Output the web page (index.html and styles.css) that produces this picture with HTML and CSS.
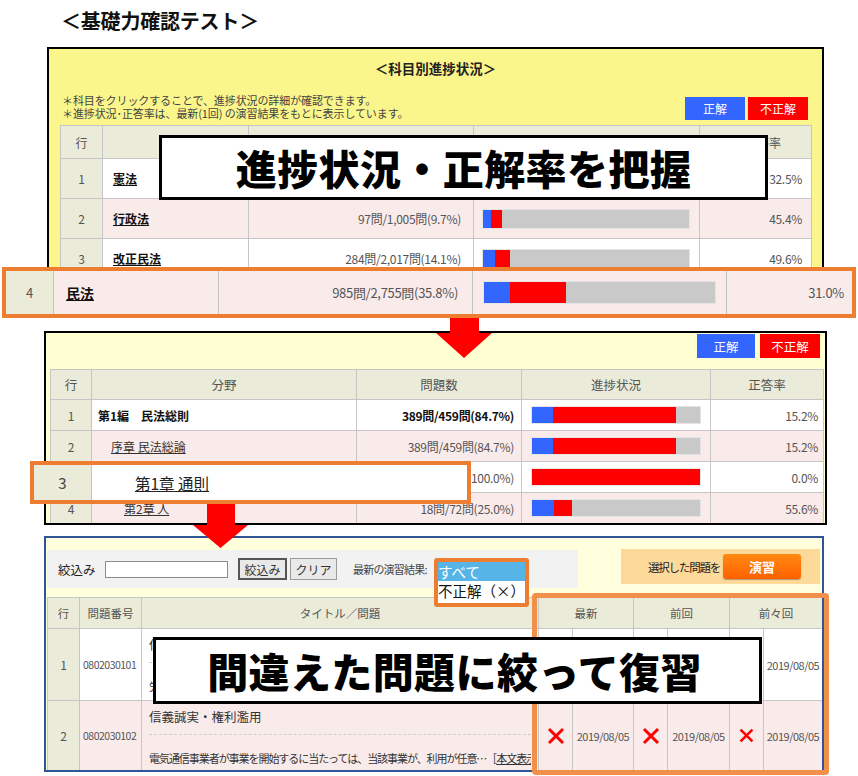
FILE: index.html
```html
<!DOCTYPE html>
<html lang="ja">
<head>
<meta charset="utf-8">
<title>基礎力確認テスト</title>
<link rel="stylesheet" href="styles.css">
</head>
<body>
<div class="canvas">
  <h1 class="page-title">＜基礎力確認テスト＞</h1>

  <!-- window 1 -->
  <section class="win win1">
    <h2 class="win1-title">＜科目別進捗状況＞</h2>
    <div class="win1-bar">
      <p class="notes">＊科目をクリックすることで、進捗状況の詳細が確認できます。<br>＊進捗状況･正答率は、最新(1回) の演習結果をもとに表示しています。</p>
      <div class="legend"><span class="lg lg-ok">正解</span><span class="lg lg-ng">不正解</span></div>
    </div>
    <table class="grid grid1">
      <colgroup><col class="g1c1"><col class="g1c2"><col class="g1c3"><col class="g1c4"><col class="g1c5"></colgroup>
      <thead><tr><th>行</th><th></th><th></th><th></th><th class="rate-h">正答率</th></tr></thead>
      <tbody>
        <tr><td class="no">1</td><td class="subj"><span class="link">憲法</span></td><td class="num"></td><td class="barcell"></td><td class="rate">32.5%</td></tr>
        <tr class="pink"><td class="no">2</td><td class="subj"><span class="link">行政法</span></td><td class="num">97問/1,005問(9.7%)</td><td class="barcell"><div class="bar"><span class="ok" style="width:8px"></span><span class="ng" style="width:11px"></span></div></td><td class="rate">45.4%</td></tr>
        <tr><td class="no">3</td><td class="subj"><span class="link">改正民法</span></td><td class="num">284問/2,017問(14.1%)</td><td class="barcell"><div class="bar"><span class="ok" style="width:12px"></span><span class="ng" style="width:15px"></span></div></td><td class="rate">49.6%</td></tr>
      </tbody>
    </table>
  </section>

  <!-- window 2 -->
  <section class="win win2">
    <div class="win2-head"><span class="lg lg-ok lg2a">正解</span><span class="lg lg-ng lg2b">不正解</span></div>
    <table class="grid grid2">
      <colgroup><col class="g2c1"><col class="g2c2"><col class="g2c3"><col class="g2c4"><col class="g2c5"></colgroup>
      <thead><tr><th>行</th><th>分野</th><th>問題数</th><th>進捗状況</th><th>正答率</th></tr></thead>
      <tbody>
        <tr><td class="no">1</td><td class="field strong">第1編　民法総則</td><td class="num strong">389問/459問(84.7%)</td><td class="barcell"><div class="bar bar2"><span class="ok" style="width:21px"></span><span class="ng" style="width:123px"></span></div></td><td class="rate">15.2%</td></tr>
        <tr class="pink"><td class="no">2</td><td class="field lv1"><span class="link2">序章 民法総論</span></td><td class="num">389問/459問(84.7%)</td><td class="barcell"><div class="bar bar2"><span class="ok" style="width:21px"></span><span class="ng" style="width:123px"></span></div></td><td class="rate">15.2%</td></tr>
        <tr><td class="no"></td><td class="field lv2"></td><td class="num">(100.0%)</td><td class="barcell"><div class="bar bar2"><span class="ng" style="width:169px"></span></div></td><td class="rate">0.0%</td></tr>
        <tr class="pink"><td class="no">4</td><td class="field lv2"><span class="link2">第2章 人</span></td><td class="num">18問/72問(25.0%)</td><td class="barcell"><div class="bar bar2"><span class="ok" style="width:22px"></span><span class="ng" style="width:18px"></span></div></td><td class="rate">55.6%</td></tr>
      </tbody>
    </table>
  </section>

  <!-- window 3 -->
  <section class="win win3">
    <div class="toolbar">
      <div class="filter">
        <span class="f-label">絞込み</span>
        <span class="f-input"></span>
        <span class="f-btn f-btn-on">絞込み</span>
        <span class="f-btn f-btn-clear">クリア</span>
        <span class="f-latest">最新の演習結果:</span>
      </div>
      <div class="exec"><span class="exec-text">選択した問題を</span><span class="exec-btn">演習</span></div>
    </div>
    <table class="grid grid3">
      <colgroup><col class="g3c1"><col class="g3c2"><col class="g3c3"><col class="g3m"><col class="g3d"><col class="g3m"><col class="g3d2"><col class="g3m"><col class="g3d3"></colgroup>
      <thead><tr><th>行</th><th>問題番号</th><th>タイトル／問題</th><th colspan="2">最新</th><th colspan="2">前回</th><th colspan="2">前々回</th></tr></thead>
      <tbody>
        <tr class="r1"><td class="no">1</td><td class="qno">0802030101</td><td class="ttl"><div class="t-head">信</div><div class="t-body">労</div></td><td class="mark"></td><td class="date"></td><td class="mark"></td><td class="date"></td><td class="mark"></td><td class="date">2019/08/05</td></tr>
        <tr class="pink r2"><td class="no">2</td><td class="qno">0802030102</td><td class="ttl"><div class="t-head">信義誠実・権利濫用</div><div class="t-body">電気通信事業者が事業を開始するに当たっては、当該事業が、利用が任意…［<span class="u">本文表示</span></div></td><td class="mark"><svg class="x" viewBox="0 0 20 20"><path d="M3 3L17 17M17 3L3 17"/></svg></td><td class="date">2019/08/05</td><td class="mark"><svg class="x" viewBox="0 0 20 20"><path d="M3 3L17 17M17 3L3 17"/></svg></td><td class="date">2019/08/05</td><td class="mark"><svg class="x xs" viewBox="0 0 20 20"><path d="M3 3L17 17M17 3L3 17"/></svg></td><td class="date">2019/08/05</td></tr>
      </tbody>
    </table>
  </section>

  <!-- arrows -->
  <svg class="arrow arrow1" viewBox="0 0 56 41"><polygon points="14,0 43,0 43,16 56,16 28,41 0,16 14,16"/></svg>
  <svg class="arrow arrow2" viewBox="0 0 55 45"><polygon points="14,0 42,0 42,22 55,22 27.5,45 0,22 14,22"/></svg>

  <!-- highlighted row 1 -->
  <div class="focus focus1">
    <span class="fc fc-no">4</span>
    <span class="fc fc-name"><span class="link">民法</span></span>
    <span class="fc fc-num">985問/2,755問(35.8%)</span>
    <span class="fc fc-bar"><span class="bar bar3"><span class="ok" style="width:26px"></span><span class="ng" style="width:56px"></span></span></span>
    <span class="fc fc-rate">31.0%</span>
  </div>

  <!-- highlighted row 2 -->
  <div class="focus focus2">
    <span class="f2-no">3</span>
    <span class="f2-name"><span class="link3">第1章 通則</span></span>
  </div>

  <!-- dropdown -->
  <div class="dropdown">
    <div class="dd-opt dd-sel">すべて</div>
    <div class="dd-opt">不正解（×）</div>
  </div>

  <!-- highlighted columns -->
  <div class="focus3"></div>

  <!-- callouts -->
  <div class="callout callout1">進捗状況・正解率を把握</div>
  <div class="callout callout3">間違えた問題に絞って復習</div>
</div>
</body>
</html>
```
FILE: styles.css
```css
* { box-sizing: border-box; margin: 0; padding: 0; }
html, body { margin: 0; background: #fff; }
body { font-family: "Noto Sans CJK JP", "Noto Sans", sans-serif; color: #333; }

.canvas { position: relative; width: 858px; height: 776px; overflow: hidden; background: #fff; }

.page-title { padding: 7px 0 0 61px; font-size: 20px; line-height: 28px; font-weight: 700; color: #111; letter-spacing: -0.2px; }

/* windows */
.win { position: absolute; overflow: hidden; }

.win1 { left: 47px; top: 47px; width: 777px; height: 232px; border: 2px solid #000; background: #fbf68b; padding: 0 11px; }
.win1-title { margin-top: 10px; font-size: 13.5px; line-height: 18px; font-weight: 700; text-align: center; color: #222; }
.win1-bar { display: flex; justify-content: space-between; align-items: flex-end; margin-top: 17px; }
.notes { font-size: 11px; line-height: 13px; color: #444; padding-left: 2px; letter-spacing: -0.1px; }
.legend { display: flex; gap: 3px; margin-right: 3px; }
.lg { display: flex; align-items: center; justify-content: center; width: 60px; height: 23px; color: #fff; font-size: 12px; }
.lg-ok { background: #3366ff; }
.lg-ng { background: #ff0000; }

/* generic grid */
.grid { border-collapse: collapse; table-layout: fixed; background: #fff; }
.grid th, .grid td { border: 1px solid #c6c6c6; font-size: 12px; color: #555; font-weight: 400; overflow: hidden; white-space: nowrap; }
.grid th { background: #ebebd9; text-align: center; }
.grid td.no { background: #ebebd9; text-align: center; }
.grid tr.pink td { background: #faebeb; }
.grid tr.pink td.no { background: #ebebd9; }
.grid td.num { text-align: right; letter-spacing: -0.3px; }
.grid td.rate { text-align: right; letter-spacing: -0.3px; }

.link { color: #111; font-weight: 700; text-decoration: underline; }
.link2 { color: #333; text-decoration: underline; }

.bar { display: flex; height: 20px; background: #c9c9c9; border: 1px solid #e4e4e4; }
.bar .ok { background: #3366ff; height: 100%; }
.bar .ng { background: #ff0000; height: 100%; }

/* grid 1 */
.grid1 { width: 751px; margin-top: 5px; }
.g1c1 { width: 42px; } .g1c2 { width: 146px; } .g1c3 { width: 225px; } .g1c4 { width: 226px; } .g1c5 { width: 112px; }
.grid1 th { height: 33px; }
.grid1 th.rate-h { text-align: right; padding-right: 30px; }
.grid1 td { height: 40px; }
.grid1 td.subj { padding-left: 10px; font-size: 12px; }
.grid1 td.num { padding-right: 12px; }
.grid1 td.rate { padding-right: 9px; }
.grid1 td.barcell { padding: 0 9px 0 8px; }

/* window 2 */
.win2 { left: 44px; top: 331px; width: 783px; height: 194px; border: 2px solid #000; background: #ffffd2; padding: 1px 2px 0 4px; }
.win2-head { display: flex; justify-content: flex-end; gap: 5px; padding-right: 3px; }
.lg2a { width: 58px; height: 24px; font-size: 12.5px; }
.lg2b { width: 60px; height: 24px; font-size: 12.5px; }
.grid2 { width: 773px; margin-top: 11px; }
.g2c1 { width: 41px; } .g2c2 { width: 265px; } .g2c3 { width: 165px; } .g2c4 { width: 189px; } .g2c5 { width: 113px; }
.grid2 th { height: 30px; font-size: 12.5px; }
.grid2 td { height: 31px; font-size: 12px; }
.grid2 td.field { padding-left: 6px; }
.grid2 td.lv1 { padding-left: 19px; }
.grid2 td.lv2 { padding-left: 32px; }
.grid2 td.strong { color: #111; font-weight: 700; }
.grid2 td.num { padding-right: 7px; }
.grid2 td.rate { padding-right: 5px; }
.grid2 td.barcell { padding: 0 9px 0 9px; }
.bar2 { height: 18px; }

/* window 3 */
.win3 { left: 44px; top: 536px; width: 780px; height: 236px; border: 2px solid #2f5597; background: #ffffdd; padding: 12px 2px 0 1px; }
.toolbar { display: flex; align-items: flex-start; height: 38px; margin-bottom: 9px; }
.filter { width: 531px; height: 38px; background: #f2f2f2; display: flex; align-items: center; padding-left: 11px; font-size: 12.5px; color: #222; }
.f-label { width: 40px; }
.f-input { width: 123px; height: 17px; margin-left: 7px; background: #fff; border: 1px solid #8a8a8a; }
.f-btn { display: flex; align-items: center; justify-content: center; height: 22px; background: #e9e9e9; border: 1px solid #9a9a9a; font-size: 12px; color: #333; }
.f-btn-on { width: 49px; margin-left: 10px; border: 2px solid #555; }
.f-btn-clear { width: 47px; margin-left: 3px; }
.f-latest { margin-left: 16px; font-size: 11px; color: #444; letter-spacing: -0.8px; }
.exec { display: flex; align-items: center; width: 199px; height: 35px; margin-left: 43px; margin-top: -1px; background: #fdd99a; padding-left: 27px; }
.exec-text { font-size: 11.5px; color: #222; letter-spacing: -1.2px; }
.exec-btn { display: flex; align-items: center; justify-content: center; width: 78px; height: 25px; margin-left: 3px; background: linear-gradient(#ff8a10, #ff6000); color: #fff; font-weight: 700; font-size: 13px; border-radius: 3px; box-shadow: 0 1px 1px rgba(0,0,0,0.3); }

.grid3 { width: 775px; }
.g3c1 { width: 32px; } .g3c2 { width: 62px; } .g3c3 { width: 397px; }
.g3m { width: 34px; } .g3d { width: 61px; } .g3d2 { width: 62px; } .g3d3 { width: 59px; }
.grid3 th { height: 31px; font-size: 11.5px; }
.grid3 tr.r1 td { height: 72px; }
.grid3 tr.r2 td { height: 70px; }
.grid3 td.no { font-size: 12px; }
.grid3 td.qno { padding-left: 3px; font-size: 10.5px; letter-spacing: -0.5px; }
.grid3 td.ttl { vertical-align: top; padding: 0 7px; }
.t-head { margin-top: 6px; line-height: 20px; padding-bottom: 7px; border-bottom: 1px dashed #cfcfcf; font-size: 12.5px; color: #333; }
.t-body { margin-top: 13px; line-height: 20px; font-size: 11px; color: #333; letter-spacing: -1.05px; overflow: hidden; }
.u { text-decoration: underline; }
.grid3 td.mark { text-align: center; }
.grid3 td.date { text-align: center; font-size: 11px; letter-spacing: -0.5px; }
.x { width: 20px; height: 20px; display: block; margin: 0 auto; fill: none; stroke: #ff0000; stroke-width: 3; }
.x.xs { width: 17px; height: 17px; }

/* arrows */
.arrow { position: absolute; fill: #ff0000; }
.arrow1 { left: 436px; top: 317px; width: 56px; height: 41px; }
.arrow2 { left: 193px; top: 503px; width: 55px; height: 45px; }

/* highlighted boxes */
.focus { position: absolute; border: 4px solid #ed7d31; display: flex; }
.focus1 { left: 2px; top: 267px; width: 854px; height: 51px; background: #faebeb; }
.fc { display: flex; align-items: center; border-right: 1px solid #c2c2c2; font-size: 13px; color: #555; }
.fc-no { width: 48px; justify-content: center; background: #ebebd9; }
.fc-name { width: 165px; padding-left: 12px; font-size: 14px; }
.fc-num { width: 254px; justify-content: flex-end; padding-right: 14px; letter-spacing: -0.3px; }
.fc-bar { width: 254px; padding: 0 10px; }
.bar3 { width: 100%; height: 23px; }
.fc-rate { flex: 1; justify-content: flex-end; padding-right: 8px; border-right: 0; letter-spacing: -0.3px; }

.focus2 { left: 30px; top: 461px; width: 441px; height: 43px; background: #fff; }
.f2-no { width: 58px; display: flex; align-items: center; justify-content: center; background: #ebebd9; border-right: 1px solid #c2c2c2; font-size: 15px; color: #444; }
.f2-name { flex: 1; display: flex; align-items: center; padding-left: 43px; }
.link3 { font-size: 15.5px; color: #222; text-decoration: underline; }

.dropdown { position: absolute; left: 434px; top: 558px; width: 95px; height: 49px; border: 4px solid #ed7d31; border-radius: 3px; background: #fff; overflow: hidden; }
.dd-opt { font-size: 14.5px; line-height: 19px; color: #111; white-space: nowrap; }
.dd-sel { background: #56b4e6; color: #fff; }

.focus3 { position: absolute; left: 532px; top: 593px; width: 297px; height: 182px; border: 5px solid #f0904a; border-radius: 4px; }

/* callouts */
.callout { position: absolute; display: flex; align-items: center; justify-content: center; background: #fff; border: 3px solid #000; font-size: 41px; letter-spacing: 0.4px; font-weight: 900; line-height: 1; color: #000; white-space: nowrap; }
.callout1 { left: 159px; top: 135px; width: 609px; height: 65px; }
.callout3 { left: 153px; top: 637px; width: 609px; height: 67px; padding-right: 6px; }
```
